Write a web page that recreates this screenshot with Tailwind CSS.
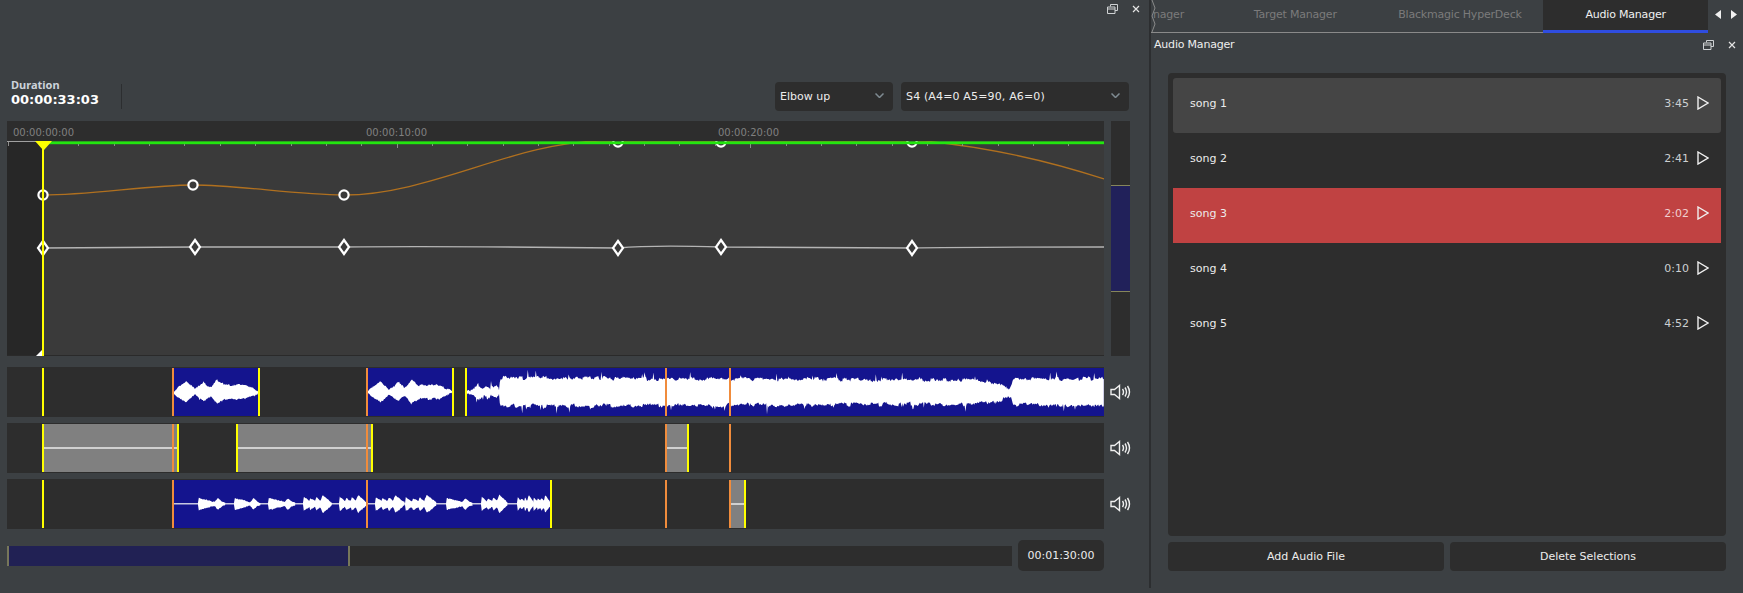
<!DOCTYPE html>
<html lang="en">
<head>
    <meta charset="UTF-8">
    <title>Audio Manager</title>
    <script src="https://cdn.jsdelivr.net/npm/@tailwindcss/browser@4"></script>
</head>
<body class="w-[1743px] h-[593px] overflow-hidden flex items-start bg-[#3c4043] text-[11px] text-[#ececec] font-['DejaVu_Sans',sans-serif]">
    <!-- left panel: timeline -->
    <div class="w-[1149px] h-[588px] shrink-0 flex flex-col">
        <div class="h-[18px] flex items-center justify-end gap-[14px] pr-[9px] text-[#e4e4e4]">
            <svg class="w-[11px] h-[10px]" viewBox="0 0 11 10" fill="none" stroke="#cfd2d4"><path d="M3.5 2.5V.5H10.5V6.5H8M.5 3H8V9.5H.5ZM.5 5H8"/></svg>
            <svg class="w-[8px] h-[8px]" viewBox="0 0 8 8" fill="none" stroke="#e4e4e4" stroke-width="1.2"><path d="M1 1L7 7M7 1L1 7"/></svg>
        </div>
        <div class="h-[29px] mt-[64px] flex items-center pr-[20px]">
            <div class="w-[122px] h-[25px] pl-[11px] flex items-center border-r border-[#2c2e30]">
                <div class="flex flex-col mb-[8px]">
                    <span class="text-[11px] leading-[15px] font-bold text-[#ccd3da] font-['Noto_Sans',sans-serif]">Duration</span>
                    <span class="text-[13px] leading-[16px] font-bold text-white">00:00:33:03</span>
                </div>
            </div>
            <div class="ml-auto w-[118px] h-[29px] rounded-[4px] bg-[#2d2d2d] flex items-center justify-between pl-[5px] pr-[9px]">
                <span class="mt-[1px]">Elbow up</span>
                <svg class="w-[9px] h-[5px] mb-[3px]" viewBox="0 0 9 5" fill="none" stroke="#7f8b92" stroke-width="1.5"><path d="M.5 .5L4.5 4.5L8.5 .5"/></svg>
            </div>
            <div class="ml-[8px] w-[228px] h-[29px] rounded-[4px] bg-[#2d2d2d] flex items-center justify-between pl-[5px] pr-[9px]">
                <span class="mt-[1px] tracking-[0.15px]">S4 (A4=0 A5=90, A6=0)</span>
                <svg class="w-[9px] h-[5px] mb-[3px]" viewBox="0 0 9 5" fill="none" stroke="#7f8b92" stroke-width="1.5"><path d="M.5 .5L4.5 4.5L8.5 .5"/></svg>
            </div>
        </div>

        <!-- curve editor -->
        <div class="mt-[10px] ml-[7px] flex gap-[7px]">
            <div class="w-[1097px] flex flex-col">
                <div class="relative h-[20px] bg-[#2d2d2d] text-[10px] leading-[20px] text-[#808080]">
                    <span class="absolute left-[6px] top-[2px]">00:00:00:00</span>
                    <span class="absolute left-[359px] top-[2px]">00:00:10:00</span>
                    <span class="absolute left-[711px] top-[2px]">00:00:20:00</span>
                </div>
                <svg class="block w-[1097px] h-[215px]" viewBox="7 141 1097 215">
                    <rect x="7" y="141" width="1097" height="215" fill="#3a3a3a"/>
                    <rect x="7" y="141" width="36" height="215" fill="#272727"/>
                    <rect x="7" y="355" width="1097" height="1" fill="#2a2a2a"/>
                    <path d="M43 195C90 195 150 185 193 185C240 185 295 195 344 195C430 195 515 142 600 141L925 141C985 147 1040 158 1104 179" fill="none" stroke="#b0701f" stroke-width="1.3"/>
                    <path d="M43 248L195 247L344 247C430 246 530 247 618 248C650 245 690 246 721 247L912 248C960 247 1040 247 1104 247" fill="none" stroke="#b4b4b4" stroke-width="1.4"/>
                    <g fill="#3a3a3a" stroke="#fff" stroke-width="2.2">
                        <circle cx="43" cy="195" r="4.6"/><circle cx="193" cy="185" r="4.6"/><circle cx="344" cy="195" r="4.6"/>
                        <circle cx="618" cy="142" r="4.6"/><circle cx="721" cy="142" r="4.6"/><circle cx="912" cy="142" r="4.6"/>
                        <path d="M43 241L48 248L43 255L38 248Z"/><path d="M195 240L200 247L195 254L190 247Z"/><path d="M344 240L349 247L344 254L339 247Z"/>
                        <path d="M618 241L623 248L618 255L613 248Z"/><path d="M721 240L726 247L721 254L716 247Z"/><path d="M912 241L917 248L912 255L907 248Z"/>
                    </g>
                    <g id="ticks" stroke="#8c8c8c"></g>
                    <rect x="7" y="141" width="36" height="1" fill="#a0a0a0"/>
                    <rect x="43" y="141.4" width="1061" height="2.8" fill="#22e60f"/>
                    <rect x="42" y="141" width="2" height="215" fill="#ffff00"/>
                    <path d="M35 141H52L44 150H43Z" fill="#ffff00"/>
                    <path d="M36 356H42V350Z" fill="#fff"/>
                </svg>
            </div>
            <div class="relative w-[19px] h-[235px] flex flex-col bg-[#2d2d2d]">
                <div class="mt-[64px] h-[107px] bg-[#21215a] border-y border-[#86865a]"></div>
            </div>
        </div>

        <!-- audio tracks -->
        <div class="mt-[11px] ml-[7px] flex flex-col gap-[6px]">
            <div class="flex items-center gap-[6px]">
                <svg id="track1" class="block w-[1097px] h-[50px] bg-[#2d2d2d]" viewBox="7 0 1097 50">
                    <rect x="174" y="1" width="85" height="48" fill="#14148e"/>
                    <rect x="368" y="1" width="85" height="48" fill="#14148e"/>
                    <rect x="467" y="1" width="637" height="48" fill="#14148e"/>
                    <g id="wave1" fill="#fff"></g>
                    <rect x="42" y="1" width="2" height="48" fill="#ffff00"/>
                    <rect x="172" y="1" width="2" height="48" fill="#f08c3c"/>
                    <rect x="258" y="1" width="2" height="48" fill="#ffff00"/>
                    <rect x="366" y="1" width="2" height="48" fill="#f08c3c"/>
                    <rect x="452" y="1" width="2" height="48" fill="#ffff00"/>
                    <rect x="465" y="1" width="2" height="48" fill="#ffff00"/>
                    <rect x="665" y="1" width="2" height="48" fill="#f08c3c"/>
                    <rect x="729" y="1" width="2" height="48" fill="#f08c3c"/>
                </svg>
                <svg class="w-[21px] h-[16px]" viewBox="0 0 21 16" fill="none" stroke="#f0f0f0" stroke-width="1.4"><path d="M1 5.5H4.5L9.5 1.5V14.5L4.5 10.5H1Z"/><path d="M12.5 5Q14.5 8 12.5 11M15 3.5Q18 8 15 12.5M17.5 2Q21.5 8 17.5 14"/></svg>
            </div>
            <div class="flex items-center gap-[6px]">
                <svg class="block w-[1097px] h-[50px] bg-[#2d2d2d]" viewBox="7 0 1097 50">
                    <g fill="#808080">
                        <rect x="44" y="1" width="134" height="48"/><rect x="238" y="1" width="134" height="48"/><rect x="667" y="1" width="21" height="48"/>
                    </g>
                    <g fill="#d0d0d0">
                        <rect x="44" y="24" width="134" height="2"/><rect x="238" y="24" width="134" height="2"/><rect x="667" y="24" width="21" height="2"/>
                    </g>
                    <rect x="42" y="1" width="2" height="48" fill="#ffff00"/>
                    <rect x="172" y="1" width="2" height="48" fill="#f08c3c"/>
                    <rect x="177" y="1" width="2" height="48" fill="#ffff00"/>
                    <rect x="236" y="1" width="2" height="48" fill="#ffff00"/>
                    <rect x="366" y="1" width="2" height="48" fill="#f08c3c"/>
                    <rect x="371" y="1" width="2" height="48" fill="#ffff00"/>
                    <rect x="665" y="1" width="2" height="48" fill="#f08c3c"/>
                    <rect x="687" y="1" width="2" height="48" fill="#ffff00"/>
                    <rect x="729" y="1" width="2" height="48" fill="#f08c3c"/>
                </svg>
                <svg class="w-[21px] h-[16px]" viewBox="0 0 21 16" fill="none" stroke="#f0f0f0" stroke-width="1.4"><path d="M1 5.5H4.5L9.5 1.5V14.5L4.5 10.5H1Z"/><path d="M12.5 5Q14.5 8 12.5 11M15 3.5Q18 8 15 12.5M17.5 2Q21.5 8 17.5 14"/></svg>
            </div>
            <div class="flex items-center gap-[6px]">
                <svg id="track3" class="block w-[1097px] h-[50px] bg-[#2d2d2d]" viewBox="7 0 1097 50">
                    <rect x="174" y="1" width="377" height="48" fill="#14148e"/>
                    <rect x="731" y="1" width="14" height="48" fill="#808080"/>
                    <rect x="731" y="24" width="14" height="2" fill="#d0d0d0"/>
                    <rect x="174" y="24" width="377" height="1.5" fill="#c8c8e0"/>
                    <g id="wave3" fill="#fff"></g>
                    <rect x="42" y="1" width="2" height="48" fill="#ffff00"/>
                    <rect x="172" y="1" width="2" height="48" fill="#f08c3c"/>
                    <rect x="366" y="1" width="2" height="48" fill="#f08c3c"/>
                    <rect x="550" y="1" width="2" height="48" fill="#ffff00"/>
                    <rect x="665" y="1" width="2" height="48" fill="#f08c3c"/>
                    <rect x="729" y="1" width="2" height="48" fill="#f08c3c"/>
                    <rect x="744" y="1" width="2" height="48" fill="#ffff00"/>
                </svg>
                <svg class="w-[21px] h-[16px]" viewBox="0 0 21 16" fill="none" stroke="#f0f0f0" stroke-width="1.4"><path d="M1 5.5H4.5L9.5 1.5V14.5L4.5 10.5H1Z"/><path d="M12.5 5Q14.5 8 12.5 11M15 3.5Q18 8 15 12.5M17.5 2Q21.5 8 17.5 14"/></svg>
            </div>
        </div>

        <div class="mt-[11px] ml-[7px] flex items-center gap-[6px]">
            <div class="w-[1005px] h-[20px] bg-[#2d2d2d] flex">
                <div class="w-[343px] h-[20px] bg-[#212154] border-x-2 border-[#77775a]"></div>
            </div>
            <div class="w-[86px] h-[31px] pt-[2px] rounded-[5px] bg-[#2d2d2d] flex items-center justify-center">00:01:30:00</div>
        </div>
    </div>
    <div class="w-[2px] h-[588px] shrink-0 bg-[#2c2e30]"></div>

    <!-- right panel: audio manager -->
    <div class="relative w-[592px] h-[593px] flex flex-col">
        <div class="h-[33px] flex">
            <div class="w-[557px] h-[33px] flex border-b border-[#8a8a8a] mb-auto text-[#7b7b7b] tracking-[-0.2px]">
                <div class="relative w-[62px] h-[31px] pl-[2px] flex items-center overflow-hidden">nager</div>
                <div class="w-[165px] h-[31px] flex items-center justify-center">Target Manager</div>
                <div class="w-[165px] h-[31px] flex items-center justify-center">Blackmagic HyperDeck</div>
                <div class="w-[165px] h-[33px] flex items-center justify-center border-b-[3px] border-[#2f4de0] -mb-[1px] bg-[#2d2d2d] text-[#f0f0f0] ml-[1px]">Audio Manager</div>
            </div>
            <div class="flex-1 h-[29px] flex items-center justify-center gap-[10px]">
                <svg class="w-[6px] h-[9px]" viewBox="0 0 6 9" fill="#f0f0f0"><path d="M6 0V9L0 4.5Z"/></svg>
                <svg class="w-[6px] h-[9px]" viewBox="0 0 6 9" fill="#f0f0f0"><path d="M0 0V9L6 4.5Z"/></svg>
            </div>
        </div>
        <div class="h-[24px] flex items-center pl-[3px] pr-[7px]">
            <span class="text-[#eeeeee] tracking-[-0.2px]">Audio Manager</span>
            <svg class="ml-auto w-[11px] h-[10px]" viewBox="0 0 11 10" fill="none" stroke="#cfd2d4"><path d="M3.5 2.5V.5H10.5V6.5H8M.5 3H8V9.5H.5ZM.5 5H8"/></svg>
            <svg class="ml-[14px] w-[8px] h-[8px]" viewBox="0 0 8 8" fill="none" stroke="#e4e4e4" stroke-width="1.2"><path d="M1 1L7 7M7 1L1 7"/></svg>
        </div>
        <div class="mt-[16px] mx-[17px] h-[463px] rounded-[4px] bg-[#2d2d2d] p-[5px] flex flex-col">
            <div class="h-[55px] shrink-0 pb-[3px] rounded-[3px] bg-[#454545] flex items-center pl-[17px] pr-[12px]">
                <span>song 1</span><span class="ml-auto text-[#ccd0d2]">3:45</span>
                <svg class="ml-[8px] mb-[2px] w-[12px] h-[14px]" viewBox="0 0 12 14" fill="none" stroke="#f0f0f0" stroke-width="1.4"><path d="M1 1L11 7L1 13Z"/></svg>
            </div>
            <div class="h-[55px] shrink-0 pb-[3px] flex items-center pl-[17px] pr-[12px]">
                <span>song 2</span><span class="ml-auto text-[#ccd0d2]">2:41</span>
                <svg class="ml-[8px] mb-[2px] w-[12px] h-[14px]" viewBox="0 0 12 14" fill="none" stroke="#f0f0f0" stroke-width="1.4"><path d="M1 1L11 7L1 13Z"/></svg>
            </div>
            <div class="h-[55px] shrink-0 pb-[3px] bg-[#c04242] flex items-center pl-[17px] pr-[12px]">
                <span>song 3</span><span class="ml-auto text-[#f0d0d0]">2:02</span>
                <svg class="ml-[8px] mb-[2px] w-[12px] h-[14px]" viewBox="0 0 12 14" fill="none" stroke="#f0f0f0" stroke-width="1.4"><path d="M1 1L11 7L1 13Z"/></svg>
            </div>
            <div class="h-[55px] shrink-0 pb-[3px] flex items-center pl-[17px] pr-[12px]">
                <span>song 4</span><span class="ml-auto text-[#ccd0d2]">0:10</span>
                <svg class="ml-[8px] mb-[2px] w-[12px] h-[14px]" viewBox="0 0 12 14" fill="none" stroke="#f0f0f0" stroke-width="1.4"><path d="M1 1L11 7L1 13Z"/></svg>
            </div>
            <div class="h-[55px] shrink-0 pb-[3px] flex items-center pl-[17px] pr-[12px]">
                <span>song 5</span><span class="ml-auto text-[#ccd0d2]">4:52</span>
                <svg class="ml-[8px] mb-[2px] w-[12px] h-[14px]" viewBox="0 0 12 14" fill="none" stroke="#f0f0f0" stroke-width="1.4"><path d="M1 1L11 7L1 13Z"/></svg>
            </div>
        </div>
        <div class="mt-[6px] mx-[17px] flex gap-[6px]">
            <div class="flex-1 h-[29px] pt-[2px] rounded-[4px] bg-[#2d2d2d] flex items-center justify-center">Add Audio File</div>
            <div class="flex-1 h-[29px] pt-[2px] rounded-[4px] bg-[#2d2d2d] flex items-center justify-center">Delete Selections</div>
        </div>
        <svg class="absolute left-0 top-0 w-[5px] h-[32px]" viewBox="0 0 5 32" fill="none" stroke="#8a8a8a"><path d="M1 0L4 8L1 16L4 24L1 32"/></svg>
    </div>

    <script>
        var NS = "http://www.w3.org/2000/svg";

        // ruler ticks
        var ticks = document.getElementById("ticks");
        for (var k = -1; k < 30; k++) {
            var x = Math.round(43 + 35.36 * k) + 0.5;
            if (x > 1104) break;
            var t = document.createElementNS(NS, "line");
            t.setAttribute("x1", x); t.setAttribute("x2", x);
            t.setAttribute("y1", 142); t.setAttribute("y2", k % 10 == 0 ? 148 : 146);
            ticks.appendChild(t);
        }

        // waveforms, amp envelope given as [x, amp] pairs
        var seed = 7;
        function rnd() { seed = (seed * 16807) % 2147483647; return seed / 2147483647; }
        function ampAt(pts, x) {
            for (var i = 1; i < pts.length; i++) {
                if (x <= pts[i][0]) {
                    var f = (x - pts[i-1][0]) / Math.max(pts[i][0] - pts[i-1][0], 0.01);
                    return pts[i-1][1] + (pts[i][1] - pts[i-1][1]) * f;
                }
            }
            return pts[pts.length-1][1];
        }
        function wave(id, cy, pts, jitter, spike, drift) {
            var top = [], bottom = [], slowUp = 0, slowDn = 0, n = 0;
            for (var x = pts[0][0]; x <= pts[pts.length-1][0]; x += 0.8) {
                if (n++ % 5 == 0) { slowUp = (rnd() - 0.5) * drift; slowDn = (rnd() - 0.5) * drift; }
                var a = ampAt(pts, x);
                var up = a + slowUp + (rnd() - 0.5) * jitter + (rnd() > 0.95 ? rnd() * spike : 0);
                var dn = a + slowDn + (rnd() - 0.5) * jitter + (rnd() > 0.95 ? rnd() * spike : 0);
                top.push(x.toFixed(1) + "," + (cy - Math.max(up, 0.6)).toFixed(1));
                bottom.unshift(x.toFixed(1) + "," + (cy + Math.max(dn, 0.6)).toFixed(1));
            }
            var p = document.createElementNS(NS, "polygon");
            p.setAttribute("points", top.concat(bottom).join(" "));
            document.getElementById(id).appendChild(p);
        }

        var phrase = [[0,1],[5,6],[12,10],[21,3],[30,9],[37,4],[43,12],[50,7],[60,7],[69,7],[80,3],[85,1]];
        wave("wave1", 25, phrase.map(function (p) { return [p[0] + 174, p[1]]; }), 1.2, 1.5, 1.5);
        wave("wave1", 25, phrase.map(function (p) { return [p[0] + 368, p[1]]; }), 1.2, 1.5, 1.5);
        wave("wave1", 25, [[467,1],[472,1],[478,7],[483,3],[487,6],[491,3],[496,5],[499,3],[500,14],[560,14],[700,13],[800,13],[900,12],[960,12.5],[985,11],[1000,8],[1008,5],[1011,6],[1013,13],[1060,13],[1104,13]], 2, 7, 3.5);

        // speech bursts: hard attack, then a taper
        var burst = function (x, w) { return [[x,1],[x+.5,6],[x+w*.6,2],[x+w*.72,6],[x+w*.85,2.5],[x+w,1]]; };
        var chop = function (x, w) { return [[x,1],[x+.5,7],[x+w*.22,3],[x+w*.25,6],[x+w*.42,3],[x+w*.46,7],[x+w*.6,3],[x+w*.68,9],[x+w,1]]; };
        [burst(198,28), burst(234,27), burst(268,28), chop(303,29), chop(339,28), chop(375,30), chop(405,32), burst(446,27), chop(481,27), chop(517,17), chop(533,18)].forEach(function (b) {
            wave("wave3", 25, b, 0.8, 0.6, 0.6);
        });
    </script>
</body>
</html>
